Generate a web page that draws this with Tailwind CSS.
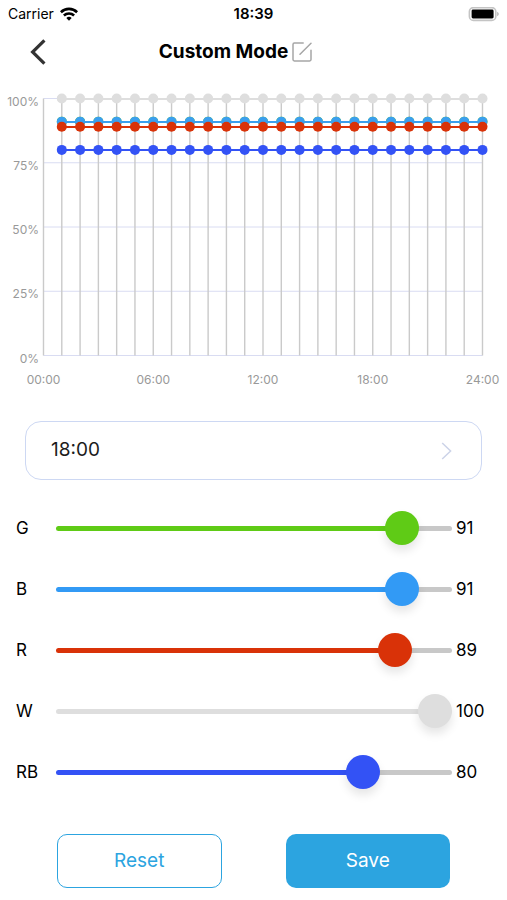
<!DOCTYPE html>
<html lang="en">
<head>
    <meta charset="UTF-8">
    <meta name="viewport" content="width=device-width, initial-scale=1.0">
    <script src="https://cdn.jsdelivr.net/npm/@tailwindcss/browser@4"></script>
    <title>Custom Mode</title>
</head>
<body class="bg-white text-[#1c1c1c] font-['Inter',sans-serif] min-h-screen">
    <!-- Status bar -->
    <div class="grid grid-cols-3 items-center h-7 px-2 text-sm text-black">
        <div class="flex items-center gap-1.5">
            <span>Carrier</span>
            <svg class="w-[18px] h-[14px]" viewBox="0 0 18 14" fill="none" stroke="#000" stroke-width="2.6" aria-hidden="true">
                <path d="M0.9 5.2a11.6 11.6 0 0 1 16.2 0"/>
                <path d="M3.9 8.5a7.4 7.4 0 0 1 10.2 0"/>
                <path d="M9 13.8 6.3 11a3.9 3.9 0 0 1 5.4 0z" fill="#000" stroke="none"/>
            </svg>
        </div>
        <span class="text-center text-[15px] font-semibold">18:39</span>
        <svg class="w-[31px] h-[15px] justify-self-end" viewBox="0 0 31 15" aria-hidden="true">
            <rect x="1.4" y="0.6" width="26.4" height="12.8" rx="4" fill="#fff" stroke="#c4c4c4" stroke-width="1.6"/>
            <rect x="3.6" y="2.6" width="22" height="8.8" rx="1.4" fill="#000"/>
            <path d="M29.2 4.8c2 .8 2 3.6 0 4.4z" fill="#b5b5b5"/>
        </svg>
    </div>

    <!-- Header -->
    <header class="grid grid-cols-[56px_1fr_56px] items-center h-12">
        <button type="button" aria-label="Back" class="flex justify-end pr-[10px]">
            <svg class="w-4 h-[26px]" viewBox="0 0 16 26" fill="none" stroke="#333" stroke-width="3.2">
                <path d="M14.4 1.4 2.6 13l11.8 11.6"/>
            </svg>
        </button>
        <div class="flex items-center justify-center gap-1 pr-9">
            <h1 class="text-[19px] font-bold text-black">Custom Mode</h1>
            <button type="button" aria-label="Rename">
                <svg class="w-5 h-5" viewBox="0 0 20 20" fill="none" stroke="#a6a6a6" stroke-width="1.5" stroke-linecap="round">
                    <path d="M11.2 1H2.4Q1 1 1 2.4v15.2Q1 19 2.4 19h15.2q1.4 0 1.4-1.4V8.2M8 12.2 19 1.2"/>
                </svg>
            </button>
        </div>
    </header>

    <svg id="chart" class="block w-full" viewBox="0 0 507 324" role="img" aria-label="Channel levels by hour"></svg>

    <main>
        <div class="px-[25px] pt-[21px]">
            <button type="button" class="flex items-center justify-between w-full h-[59px] pl-[25px] pr-[29px] rounded-2xl border border-[#cdd8f3] text-[19px]">
                <span>18:00</span>
                <svg class="w-[11px] h-[18px]" viewBox="0 0 11 18" fill="none" stroke="#ccd3e8" stroke-width="1.5">
                    <path d="M1.2 1 9.6 9l-8.4 8"/>
                </svg>
            </button>
        </div>

        <!-- Channel sliders -->
        <div class="pt-[18px] pl-4 pr-[11px] text-[17px] text-black">
            <div class="flex items-center h-[61px]">
                <label for="g" class="w-10">G</label>
                <input type="range" id="g" value="91" style="--level: 91%" class="flex-1 min-w-0 h-[34px] appearance-none text-[#5fcb16] bg-transparent [&::-webkit-slider-runnable-track]:h-[5px] [&::-webkit-slider-runnable-track]:rounded-full [&::-webkit-slider-runnable-track]:bg-[linear-gradient(to_right,currentColor_var(--level),#c8c8c8_var(--level))] [&::-webkit-slider-thumb]:appearance-none [&::-webkit-slider-thumb]:size-[34px] [&::-webkit-slider-thumb]:-mt-[15px] [&::-webkit-slider-thumb]:rounded-full [&::-webkit-slider-thumb]:bg-current [&::-webkit-slider-thumb]:shadow-[0_6px_10px_rgb(0_0_0/0.1)]">
                <output for="g" class="w-10 ml-1">91</output>
            </div>
            <div class="flex items-center h-[61px]">
                <label for="b" class="w-10">B</label>
                <input type="range" id="b" value="91" style="--level: 91%" class="flex-1 min-w-0 h-[34px] appearance-none text-[#329af5] bg-transparent [&::-webkit-slider-runnable-track]:h-[5px] [&::-webkit-slider-runnable-track]:rounded-full [&::-webkit-slider-runnable-track]:bg-[linear-gradient(to_right,currentColor_var(--level),#c8c8c8_var(--level))] [&::-webkit-slider-thumb]:appearance-none [&::-webkit-slider-thumb]:size-[34px] [&::-webkit-slider-thumb]:-mt-[15px] [&::-webkit-slider-thumb]:rounded-full [&::-webkit-slider-thumb]:bg-current [&::-webkit-slider-thumb]:shadow-[0_6px_10px_rgb(0_0_0/0.1)]">
                <output for="b" class="w-10 ml-1">91</output>
            </div>
            <div class="flex items-center h-[61px]">
                <label for="r" class="w-10">R</label>
                <input type="range" id="r" value="89" style="--level: 89%" class="flex-1 min-w-0 h-[34px] appearance-none text-[#d93208] bg-transparent [&::-webkit-slider-runnable-track]:h-[5px] [&::-webkit-slider-runnable-track]:rounded-full [&::-webkit-slider-runnable-track]:bg-[linear-gradient(to_right,currentColor_var(--level),#c8c8c8_var(--level))] [&::-webkit-slider-thumb]:appearance-none [&::-webkit-slider-thumb]:size-[34px] [&::-webkit-slider-thumb]:-mt-[15px] [&::-webkit-slider-thumb]:rounded-full [&::-webkit-slider-thumb]:bg-current [&::-webkit-slider-thumb]:shadow-[0_6px_10px_rgb(0_0_0/0.1)]">
                <output for="r" class="w-10 ml-1">89</output>
            </div>
            <div class="flex items-center h-[61px]">
                <label for="w" class="w-10">W</label>
                <input type="range" id="w" value="100" style="--level: 100%" class="flex-1 min-w-0 h-[34px] appearance-none text-[#dedede] bg-transparent [&::-webkit-slider-runnable-track]:h-[5px] [&::-webkit-slider-runnable-track]:rounded-full [&::-webkit-slider-runnable-track]:bg-[linear-gradient(to_right,currentColor_var(--level),#c8c8c8_var(--level))] [&::-webkit-slider-thumb]:appearance-none [&::-webkit-slider-thumb]:size-[34px] [&::-webkit-slider-thumb]:-mt-[15px] [&::-webkit-slider-thumb]:rounded-full [&::-webkit-slider-thumb]:bg-current [&::-webkit-slider-thumb]:shadow-[0_6px_10px_rgb(0_0_0/0.1)]">
                <output for="w" class="w-10 ml-1">100</output>
            </div>
            <div class="flex items-center h-[61px]">
                <label for="rb" class="w-10">RB</label>
                <input type="range" id="rb" value="80" style="--level: 80%" class="flex-1 min-w-0 h-[34px] appearance-none text-[#3352f5] bg-transparent [&::-webkit-slider-runnable-track]:h-[5px] [&::-webkit-slider-runnable-track]:rounded-full [&::-webkit-slider-runnable-track]:bg-[linear-gradient(to_right,currentColor_var(--level),#c8c8c8_var(--level))] [&::-webkit-slider-thumb]:appearance-none [&::-webkit-slider-thumb]:size-[34px] [&::-webkit-slider-thumb]:-mt-[15px] [&::-webkit-slider-thumb]:rounded-full [&::-webkit-slider-thumb]:bg-current [&::-webkit-slider-thumb]:shadow-[0_6px_10px_rgb(0_0_0/0.1)]">
                <output for="rb" class="w-10 ml-1">80</output>
            </div>
        </div>

        <div class="grid grid-cols-2 gap-16 px-[57px] pt-[31px] text-[19px]">
            <button type="button" class="h-[54px] rounded-[10px] border border-[#2ca4e0] text-[#2ca4e0]">Reset</button>
            <button type="button" class="h-[54px] rounded-[10px] bg-[#2ca4e0] text-white">Save</button>
        </div>
    </main>

    <script>
        const chart = document.getElementById('chart');
        const left = 43.5, right = 482.5, top0 = 22.5, bottom = 279.5;
        const x = (hour) => left + (right - left) * hour / 24;
        const y = (level) => bottom - (bottom - top0) * level / 100;

        function add(tag, attrs, text) {
            const el = document.createElementNS('http://www.w3.org/2000/svg', tag);
            for (const key in attrs) el.setAttribute(key, attrs[key]);
            if (text) el.textContent = text;
            chart.appendChild(el);
        }

        // Grid
        for (let level = 0; level <= 100; level += 25) {
            add('line', { x1: left, x2: right, y1: y(level), y2: y(level), stroke: '#d9dcf2' });
            add('text', { x: 39, y: y(level) + 7, 'text-anchor': 'end', 'font-size': 12, fill: '#999' }, level + '%');
        }
        for (let hour = 0; hour <= 24; hour++) {
            add('line', { x1: x(hour), x2: x(hour), y1: top0, y2: bottom, stroke: '#cacaca', 'stroke-width': 1.4 });
            if (hour % 6 === 0) {
                add('text', { x: x(hour), y: 308, 'text-anchor': 'middle', 'font-size': 12, fill: '#999' }, String(hour).padStart(2, '0') + ':00');
            }
        }

        // One line per channel
        const channels = [
            { level: 91, color: '#5fcb16' },
            { level: 91, color: '#3a9fee' },
            { level: 89, color: '#d93208' },
            { level: 100, color: '#dedede' },
            { level: 80, color: '#3352f5' },
        ];
        channels.forEach(({ level, color }) => {
            add('line', { x1: x(1), x2: x(24), y1: y(level), y2: y(level), stroke: color, 'stroke-width': 2, 'shape-rendering': 'crispEdges' });
            for (let hour = 1; hour <= 24; hour++) {
                add('circle', { cx: x(hour), cy: y(level), r: 5, fill: color });
            }
        });

        document.querySelectorAll('input[type=range]').forEach((input) => {
            input.addEventListener('input', () => {
                input.style.setProperty('--level', input.value + '%');
                input.nextElementSibling.value = input.value;
            });
        });
    </script>
</body>
</html>
